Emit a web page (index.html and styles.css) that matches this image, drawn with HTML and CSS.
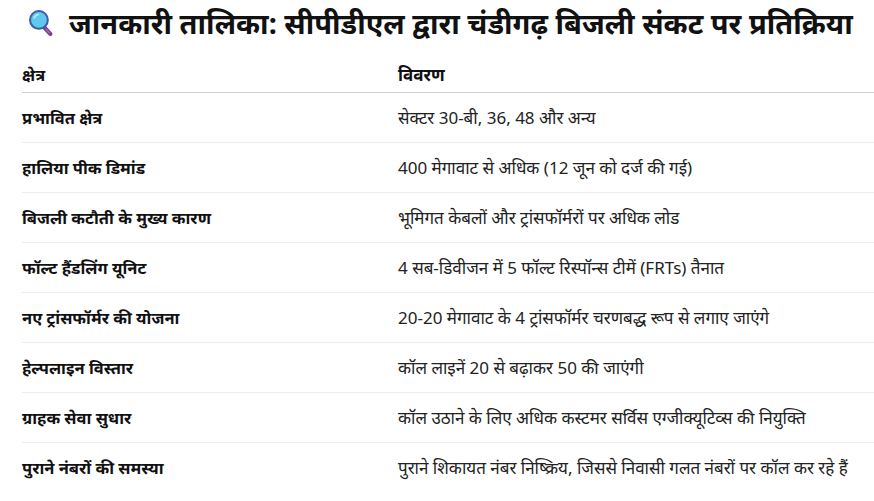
FILE: index.html
```html
<!DOCTYPE html>
<html lang="hi">
<head>
<meta charset="utf-8">
<title>जानकारी तालिका</title>
<link rel="stylesheet" href="styles.css">
</head>
<body>
<div class="page">
  <h1 class="title">
    <svg class="icon" viewBox="0 0 30 30" width="31" height="31" aria-hidden="true">
      <path d="M17.5 19.5 L23.5 26" stroke="#7b3f8f" stroke-width="4.2" stroke-linecap="round"/>
      <path d="M19.5 21.5 L22.5 24.8" stroke="#a060b8" stroke-width="1.6" stroke-linecap="round"/>
      <circle cx="12.5" cy="12.5" r="8.6" fill="#5ec8ef" stroke="#3a5fa8" stroke-width="2"/>
      <path d="M8 10.5 A5 5 0 0 1 12 7.2" stroke="#b8ecfb" stroke-width="1.6" fill="none" stroke-linecap="round"/>
    </svg>
    <span>जानकारी तालिका: सीपीडीएल द्वारा चंडीगढ़ बिजली संकट पर प्रतिक्रिया</span>
  </h1>
  <table class="info">
    <thead>
      <tr><th class="c1">क्षेत्र</th><th>विवरण</th></tr>
    </thead>
    <tbody>
      <tr><td class="c1">प्रभावित क्षेत्र</td><td>सेक्टर 30-बी, 36, 48 और अन्य</td></tr>
      <tr><td class="c1">हालिया पीक डिमांड</td><td>400 मेगावाट से अधिक (12 जून को दर्ज की गई)</td></tr>
      <tr><td class="c1">बिजली कटौती के मुख्य कारण</td><td>भूमिगत केबलों और ट्रांसफॉर्मरों पर अधिक लोड</td></tr>
      <tr><td class="c1">फॉल्ट हैंडलिंग यूनिट</td><td>4 सब-डिवीजन में 5 फॉल्ट रिस्पॉन्स टीमें (FRTs) तैनात</td></tr>
      <tr><td class="c1">नए ट्रांसफॉर्मर की योजना</td><td>20-20 मेगावाट के 4 ट्रांसफॉर्मर चरणबद्ध रूप से लगाए जाएंगे</td></tr>
      <tr><td class="c1">हेल्पलाइन विस्तार</td><td>कॉल लाइनें 20 से बढ़ाकर 50 की जाएंगी</td></tr>
      <tr><td class="c1">ग्राहक सेवा सुधार</td><td>कॉल उठाने के लिए अधिक कस्टमर सर्विस एग्जीक्यूटिव्स की नियुक्ति</td></tr>
      <tr><td class="c1">पुराने नंबरों की समस्या</td><td>पुराने शिकायत नंबर निष्क्रिय, जिससे निवासी गलत नंबरों पर कॉल कर रहे हैं</td></tr>
    </tbody>
  </table>
</div>
</body>
</html>
```

FILE: styles.css
```css
html, body {
  margin: 0;
  padding: 0;
  background: #ffffff;
}

body {
  font-family: "Noto Sans", "Open Sans", sans-serif;
  color: #222222;
  overflow: hidden;
}

.page {
  padding: 0 0 0 22px;
}

.title {
  display: flex;
  align-items: center;
  gap: 12px;
  margin: 0;
  height: 44px;
  padding-left: 4px;
  font-size: 29px;
  font-weight: 700;
  color: #111111;
  white-space: nowrap;
}

.icon {
  flex: none;
}

.info {
  width: 852px;
  border-collapse: collapse;
  font-size: 17px;
  table-layout: fixed;
}

.info th,
.info td {
  text-align: left;
  padding: 0;
  vertical-align: middle;
}

.info th {
  height: 43px;
  line-height: 24px;
  padding-bottom: 5px;
  vertical-align: bottom;
  border-bottom: 1px solid #d0d0d0;
  font-weight: 700;
  color: #111111;
}

.info td {
  height: 49px;
  border-bottom: 1px solid #ececec;
}

.info tbody tr:last-child td {
  border-bottom: none;
}

.info .c1 {
  width: 376px;
  font-size: 16.5px;
  font-weight: 700;
  color: #111111;
}
```
